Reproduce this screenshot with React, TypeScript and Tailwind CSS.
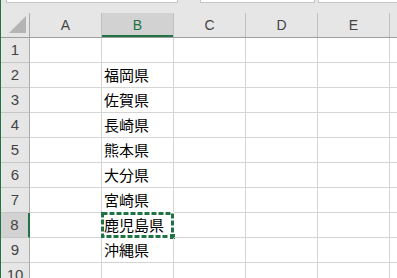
import React from 'react';

const columns = ['A', 'B', 'C', 'D', 'E', 'F'];

// B列の値（行番号 → 県名）
const values: Record<number, string> = {
  2: '福岡県',
  3: '佐賀県',
  4: '長崎県',
  5: '熊本県',
  6: '大分県',
  7: '宮崎県',
  8: '鹿児島県',
  9: '沖縄県',
};

const activeRow = 8;
const activeCol = 'B';

const font = { fontFamily: '"Liberation Sans", "Noto Sans CJK JP", sans-serif' };

// コピー範囲の点線（マーチングアンツ）
function CopyMarquee() {
  return (
    <div className="absolute -left-px -top-px w-[73px] h-[26px] pointer-events-none">
      <svg width="73" height="26" className="block">
        <rect x="1.5" y="1.5" width="70" height="23" fill="none" stroke="#ffffff" strokeWidth="3" />
        <rect x="1.5" y="1.5" width="70" height="23" fill="none" stroke="#217346" strokeWidth="3" strokeDasharray="5 2" />
      </svg>
      <div className="absolute left-[68px] top-[21px] w-[7px] h-[7px] bg-[#217346] border border-white" />
    </div>
  );
}

export default function App() {
  const rows = Array.from({ length: 10 }, (_, i) => i + 1);

  return (
    <div className="w-[397px] h-[278px] overflow-hidden bg-white flex" style={font}>
      <div className="w-px shrink-0 bg-[#217346]" />
      <div className="flex-1 flex flex-col min-w-0">
        {/* 数式バーの下端 */}
        <div className="h-[13px] shrink-0 bg-[#e6e6e6] flex items-start">
          <div className="ml-[5px] w-[175px] h-[3px] bg-white border-x border-b border-[#c6c6c6]" />
          <div className="ml-[22px] w-[117px] h-[3px] bg-white border-x border-b border-[#c6c6c6]" />
          <div className="ml-[3px] w-[80px] h-[3px] bg-white border-l border-b border-[#c6c6c6]" />
        </div>

        {/* 列見出し */}
        <div className="h-[25px] shrink-0 flex bg-[#e6e6e6] border-b border-[#9e9e9e]">
          <div className="w-[29px] shrink-0 relative border-r border-[#ababab]">
            <svg width="28" height="24" className="absolute left-0 top-0">
              <polygon points="8,20 25,20 25,3" fill="#b4b4b4" />
            </svg>
          </div>
          {columns.map((c) => (
            <div
              key={c}
              className={`w-[72px] shrink-0 flex items-center justify-center text-[14px] border-r border-[#c0c0c0] ${
                c === activeCol
                  ? 'bg-[#d2d2d2] text-[#217346] shadow-[inset_0_-2px_0_#217346]'
                  : 'text-[#444444]'
              }`}
            >
              {c === 'F' ? '' : c}
            </div>
          ))}
        </div>

        {/* 行 */}
        {rows.map((r) => (
          <div key={r} className="h-[25px] shrink-0 flex">
            <div
              className={`w-[29px] shrink-0 flex items-center justify-center text-[15px] text-[#444444] border-b border-[#c6c6c6] ${
                r === activeRow
                  ? 'bg-[#d2d2d2] border-r-2 border-r-[#217346]'
                  : 'bg-[#e6e6e6] border-r border-r-[#ababab]'
              }`}
            >
              {r}
            </div>
            {columns.map((c) => (
              <div
                key={c}
                className="w-[72px] shrink-0 relative flex items-center pl-[2px] text-[15px] leading-none text-black border-r border-b border-[#d4d4d4]"
              >
                {c === 'B' ? values[r] : null}
                {c === activeCol && r === activeRow && <CopyMarquee />}
              </div>
            ))}
          </div>
        ))}
      </div>
    </div>
  );
}
